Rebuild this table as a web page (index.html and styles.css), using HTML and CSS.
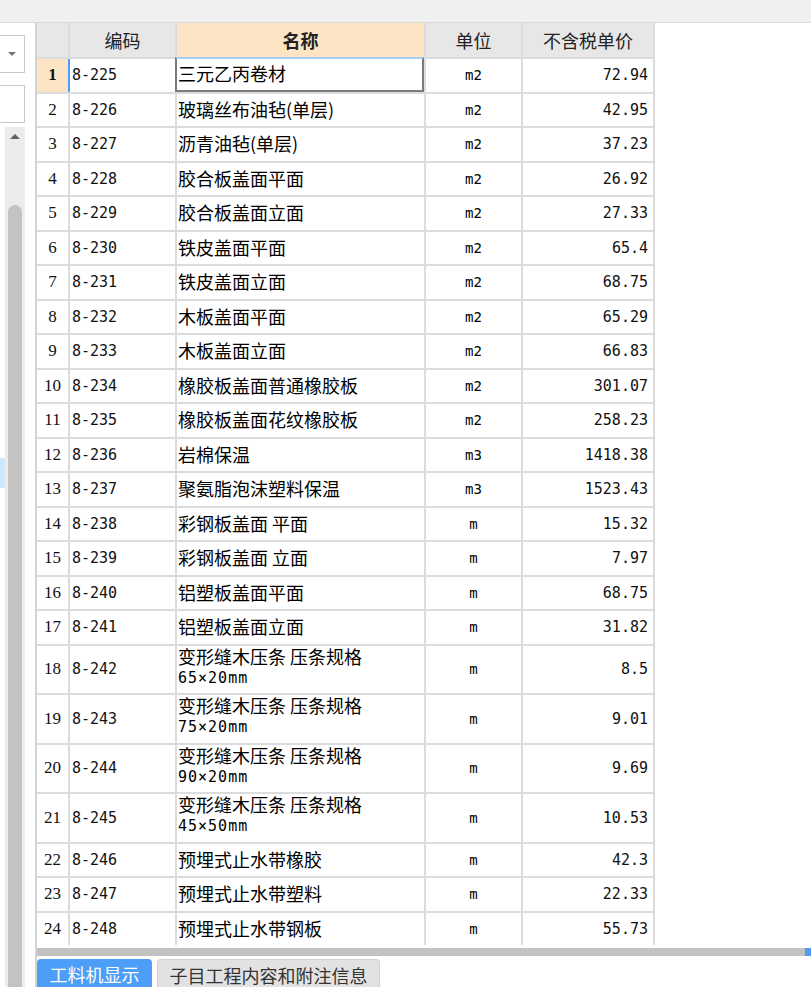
FILE: index.html
```html
<!DOCTYPE html>
<html lang="zh-CN">
<head>
<meta charset="utf-8">
<title>定额</title>
<link rel="stylesheet" href="styles.css">
</head>
<body>
<div class="topbar"></div>
<div class="content">
  <div class="side">
    <div class="combo"><span class="down"></span></div>
    <div class="textbox"></div>
    <div class="lower">
      <div class="strip"><div class="hl"></div></div>
      <div class="track"><span class="up"></span><div class="thumb"></div></div>
    </div>
  </div>
  <div class="main">
    <div class="table">
      <div class="row head"><div></div><div>编码</div><div class="hot">名称</div><div>单位</div><div>不含税单价</div></div>
      <div class="row"><div class="num cur">1</div><div class="code sel">8-225</div><div class="name edit">三元乙丙卷材</div><div class="unit">m2</div><div class="price">72.94</div></div>
      <div class="row"><div class="num">2</div><div class="code">8-226</div><div class="name">玻璃丝布油毡(单层)</div><div class="unit">m2</div><div class="price">42.95</div></div>
      <div class="row"><div class="num">3</div><div class="code">8-227</div><div class="name">沥青油毡(单层)</div><div class="unit">m2</div><div class="price">37.23</div></div>
      <div class="row"><div class="num">4</div><div class="code">8-228</div><div class="name">胶合板盖面平面</div><div class="unit">m2</div><div class="price">26.92</div></div>
      <div class="row"><div class="num">5</div><div class="code">8-229</div><div class="name">胶合板盖面立面</div><div class="unit">m2</div><div class="price">27.33</div></div>
      <div class="row"><div class="num">6</div><div class="code">8-230</div><div class="name">铁皮盖面平面</div><div class="unit">m2</div><div class="price">65.4</div></div>
      <div class="row"><div class="num">7</div><div class="code">8-231</div><div class="name">铁皮盖面立面</div><div class="unit">m2</div><div class="price">68.75</div></div>
      <div class="row"><div class="num">8</div><div class="code">8-232</div><div class="name">木板盖面平面</div><div class="unit">m2</div><div class="price">65.29</div></div>
      <div class="row"><div class="num">9</div><div class="code">8-233</div><div class="name">木板盖面立面</div><div class="unit">m2</div><div class="price">66.83</div></div>
      <div class="row"><div class="num">10</div><div class="code">8-234</div><div class="name">橡胶板盖面普通橡胶板</div><div class="unit">m2</div><div class="price">301.07</div></div>
      <div class="row"><div class="num">11</div><div class="code">8-235</div><div class="name">橡胶板盖面花纹橡胶板</div><div class="unit">m2</div><div class="price">258.23</div></div>
      <div class="row"><div class="num">12</div><div class="code">8-236</div><div class="name">岩棉保温</div><div class="unit">m3</div><div class="price">1418.38</div></div>
      <div class="row"><div class="num">13</div><div class="code">8-237</div><div class="name">聚氨脂泡沫塑料保温</div><div class="unit">m3</div><div class="price">1523.43</div></div>
      <div class="row"><div class="num">14</div><div class="code">8-238</div><div class="name">彩钢板盖面 平面</div><div class="unit">m</div><div class="price">15.32</div></div>
      <div class="row"><div class="num">15</div><div class="code">8-239</div><div class="name">彩钢板盖面 立面</div><div class="unit">m</div><div class="price">7.97</div></div>
      <div class="row"><div class="num">16</div><div class="code">8-240</div><div class="name">铝塑板盖面平面</div><div class="unit">m</div><div class="price">68.75</div></div>
      <div class="row"><div class="num">17</div><div class="code">8-241</div><div class="name">铝塑板盖面立面</div><div class="unit">m</div><div class="price">31.82</div></div>
      <div class="row tall"><div class="num">18</div><div class="code">8-242</div><div class="name"><span class="l1">变形缝木压条 压条规格</span><span class="spec">65×20mm</span></div><div class="unit">m</div><div class="price">8.5</div></div>
      <div class="row tall"><div class="num">19</div><div class="code">8-243</div><div class="name"><span class="l1">变形缝木压条 压条规格</span><span class="spec">75×20mm</span></div><div class="unit">m</div><div class="price">9.01</div></div>
      <div class="row tall"><div class="num">20</div><div class="code">8-244</div><div class="name"><span class="l1">变形缝木压条 压条规格</span><span class="spec">90×20mm</span></div><div class="unit">m</div><div class="price">9.69</div></div>
      <div class="row tall"><div class="num">21</div><div class="code">8-245</div><div class="name"><span class="l1">变形缝木压条 压条规格</span><span class="spec">45×50mm</span></div><div class="unit">m</div><div class="price">10.53</div></div>
      <div class="row"><div class="num">22</div><div class="code">8-246</div><div class="name">预埋式止水带橡胶</div><div class="unit">m</div><div class="price">42.3</div></div>
      <div class="row"><div class="num">23</div><div class="code">8-247</div><div class="name">预埋式止水带塑料</div><div class="unit">m</div><div class="price">22.33</div></div>
      <div class="row last"><div class="num">24</div><div class="code">8-248</div><div class="name">预埋式止水带钢板</div><div class="unit">m</div><div class="price">55.73</div></div>
    </div>
    <div class="hscroll"><div class="hend"></div></div>
    <div class="tabs">
      <div class="tab active">工料机显示</div>
      <div class="tab other">子目工程内容和附注信息</div>
    </div>
  </div>
</div>
</body>
</html>
```
FILE: styles.css
```css
html, body {
  margin: 0;
  padding: 0;
  background: #fff;
}
body {
  height: 100vh;
  overflow: hidden;
  display: flex;
  flex-direction: column;
  font-family: "Noto Sans CJK SC", sans-serif;
  color: #000;
}
.topbar {
  height: 22px;
  flex: none;
  background: #f0f0f0;
  border-bottom: 1px solid #dadada;
}
.content {
  flex: 1;
  display: flex;
  min-height: 0;
}
.side {
  width: 35px;
  flex: none;
  display: flex;
  flex-direction: column;
  background: #fff;
}
.combo, .textbox {
  margin-left: -1px;
  width: 26px;
  height: 38px;
  box-sizing: border-box;
  border: 1px solid #c9c9c9;
  background: #fff;
  flex: none;
}
.combo {
  margin-top: 12px;
  display: flex;
  align-items: center;
  justify-content: center;
}
.down {
  width: 0;
  height: 0;
  border-left: 4px solid transparent;
  border-right: 4px solid transparent;
  border-top: 4px solid #777;
}
.textbox {
  margin-top: 12px;
}
.lower {
  flex: 1;
  display: flex;
  margin-top: 4px;
  min-height: 0;
}
.strip {
  width: 5px;
}
.hl {
  margin-top: 331px;
  height: 30px;
  background: #cfe7fb;
}
.track {
  width: 20px;
  background: #ececec;
  display: flex;
  flex-direction: column;
  align-items: center;
}
.up {
  margin-top: 7px;
  width: 0;
  height: 0;
  border-left: 5px solid transparent;
  border-right: 5px solid transparent;
  border-bottom: 5px solid #606060;
}
.thumb {
  margin-top: 66px;
  width: 14px;
  flex: 1;
  background: #c3c3c3;
  border-radius: 7px 7px 0 0;
}
.main {
  flex: 1;
  min-width: 0;
  display: flex;
  flex-direction: column;
  border-left: 2px solid #d4d4d4;
}
.table {
  align-self: flex-start;
  display: flex;
  flex-direction: column;
  gap: 2px;
  background: #dcdcdc;
  padding-right: 2px;
}
.row {
  display: grid;
  grid-template-columns: 31px 105px 247px 95px 130px;
  column-gap: 2px;
  height: 32.5px;
}
.row > div {
  background: #fff;
  display: flex;
  align-items: center;
  overflow: hidden;
  white-space: nowrap;
  box-sizing: border-box;
}
.row.tall {
  height: 47.5px;
}
.row.head {
  height: 34px;
}
.row.head > div {
  background: #e7e7e7;
  justify-content: center;
  font-family: "Noto Sans CJK SC", sans-serif;
  font-size: 18px;
  color: #222;
}
.row.head > .hot {
  background: #fde4c5;
  font-weight: bold;
}
.num {
  justify-content: center;
  font-family: "Liberation Serif", "Noto Sans CJK SC", serif;
  font-size: 17px;
  color: #111;
}
.row > .num.cur {
  background: #fde4c5;
  font-weight: bold;
}
.code {
  padding-left: 2px;
  font-family: "DejaVu Sans Mono", monospace;
  font-size: 15px;
  color: #111;
}
.row > .code.sel {
  margin-left: -2px;
  border-left: 2px solid #4d9df8;
}
.name {
  padding-left: 1px;
  padding-bottom: 2px;
  font-family: "Noto Sans CJK SC", sans-serif;
  font-size: 18px;
}
.row > .name.edit {
  margin-left: -2px;
  margin-top: -2px;
  border: 2px solid #7b7b7b;
  border-top-color: #a9cdf3;
}
.row.tall > .name {
  display: block;
  overflow: visible;
  padding-top: 0;
  padding-bottom: 0;
}
.l1 {
  display: block;
  margin-top: -3px;
  line-height: 26px;
  height: 26px;
}
.spec {
  display: block;
  font-family: "DejaVu Sans Mono", "Noto Sans CJK SC", monospace;
  font-size: 15px;
  line-height: 18px;
  letter-spacing: 1px;
}
.unit {
  justify-content: center;
  font-family: "DejaVu Sans Mono", monospace;
  font-size: 14px;
}
.price {
  justify-content: flex-end;
  padding-right: 5px;
  font-family: "DejaVu Sans Mono", monospace;
  font-size: 15px;
  color: #111;
}
.hscroll {
  margin-top: 3px;
  height: 8px;
  flex: none;
  background: #c2c2c2;
  display: flex;
  justify-content: flex-end;
}
.hend {
  width: 6px;
  background: #4d9df8;
}
.tabs {
  margin-top: 3px;
  display: flex;
  gap: 5px;
  flex: none;
}
.tab {
  height: 30px;
  box-sizing: border-box;
  padding-top: 2px;
  font-family: "Noto Sans CJK SC", sans-serif;
  font-size: 18px;
  text-align: center;
  border-radius: 4px 4px 0 0;
  white-space: nowrap;
}
.tab.active {
  width: 115px;
  background: #4d9ef8;
  color: #fff;
}
.tab.other {
  width: 223px;
  background: #e2e2e2;
  border: 1px solid #d2d2d2;
  border-bottom: none;
  color: #333;
}
```
